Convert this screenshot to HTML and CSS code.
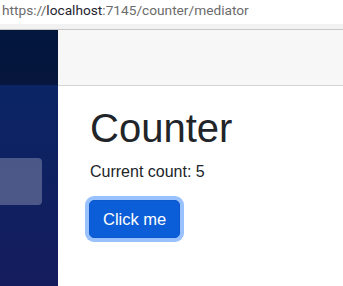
FILE: index.html
```html
<!DOCTYPE html>
<html>
<head>
<meta charset="utf-8">
<link rel="stylesheet" href="styles.css">
</head>
<body>
<div class="urlbar"><span class="dim">https://</span><span class="host">localhost</span><span class="dim">:7145/counter/mediator</span></div>
<div class="urlstrip"></div>
<div class="page">
  <div class="sidebar">
    <div class="sidebar-top"></div>
    <nav class="nav">
      <div class="nav-item active"></div>
    </nav>
  </div>
  <main class="main">
    <div class="top-row"></div>
    <article class="content">
      <h1 class="title">Counter</h1>
      <p class="count">Current count: 5</p>
      <button class="btn">Click me</button>
    </article>
  </main>
</div>
</body>
</html>
```

FILE: styles.css
```css
* { box-sizing: border-box; }
html, body { margin: 0; padding: 0; background: #fff; }
body { width: 343px; height: 286px; overflow: hidden; font-family: "Liberation Sans", Arial, sans-serif; color: #212529; }

.urlbar {
  height: 24px;
  background: #fff;
  padding-left: 2px;
  font-family: Roboto, "Noto Sans", sans-serif;
  font-size: 13.7px;
  line-height: 21px;
  white-space: nowrap;
}
.urlbar .dim { color: #6b6b6b; }
.urlbar .host { color: #1f2430; }
.urlstrip {
  height: 6px;
  background: #f2f2f2;
  border-bottom: 1px solid #c8c8c8;
}

.page { display: flex; height: 256px; }
.sidebar {
  width: 58px;
  flex: none;
  background-image: linear-gradient(180deg, rgb(7, 39, 103) 0%, rgb(21, 28, 93) 100%);
}
.sidebar-top {
  height: 55px;
  background-color: rgba(0, 0, 0, 0.4);
}
.nav { padding-top: 73px; }
.nav-item {
  width: 42px;
  height: 47px;
  border-radius: 0 4px 4px 0;
  background: rgba(255, 255, 255, 0.25);
}

.main { flex: 1; display: flex; flex-direction: column; }
.top-row {
  height: 56px;
  background: #f7f7f7;
  border-bottom: 1px solid #d6d5d5;
}
.content { padding: 17.6px 0 0 32px; }
.title {
  margin: 0 0 8px;
  font-size: 40px;
  font-weight: 400;
  line-height: 1.2;
}
.count {
  margin: 0 0 16px;
  font-size: 16px;
  line-height: 1.5;
}
.btn {
  font-family: inherit;
  font-size: 16.5px;
  line-height: 24px;
  padding: 6px 13px;
  color: #fff;
  background: #0b5ed7;
  border: 1px solid #0a58ca;
  border-radius: 5px;
  box-shadow: 0 0 0 4px rgba(49, 132, 253, 0.5);
  margin-left: -1px;
}
```
